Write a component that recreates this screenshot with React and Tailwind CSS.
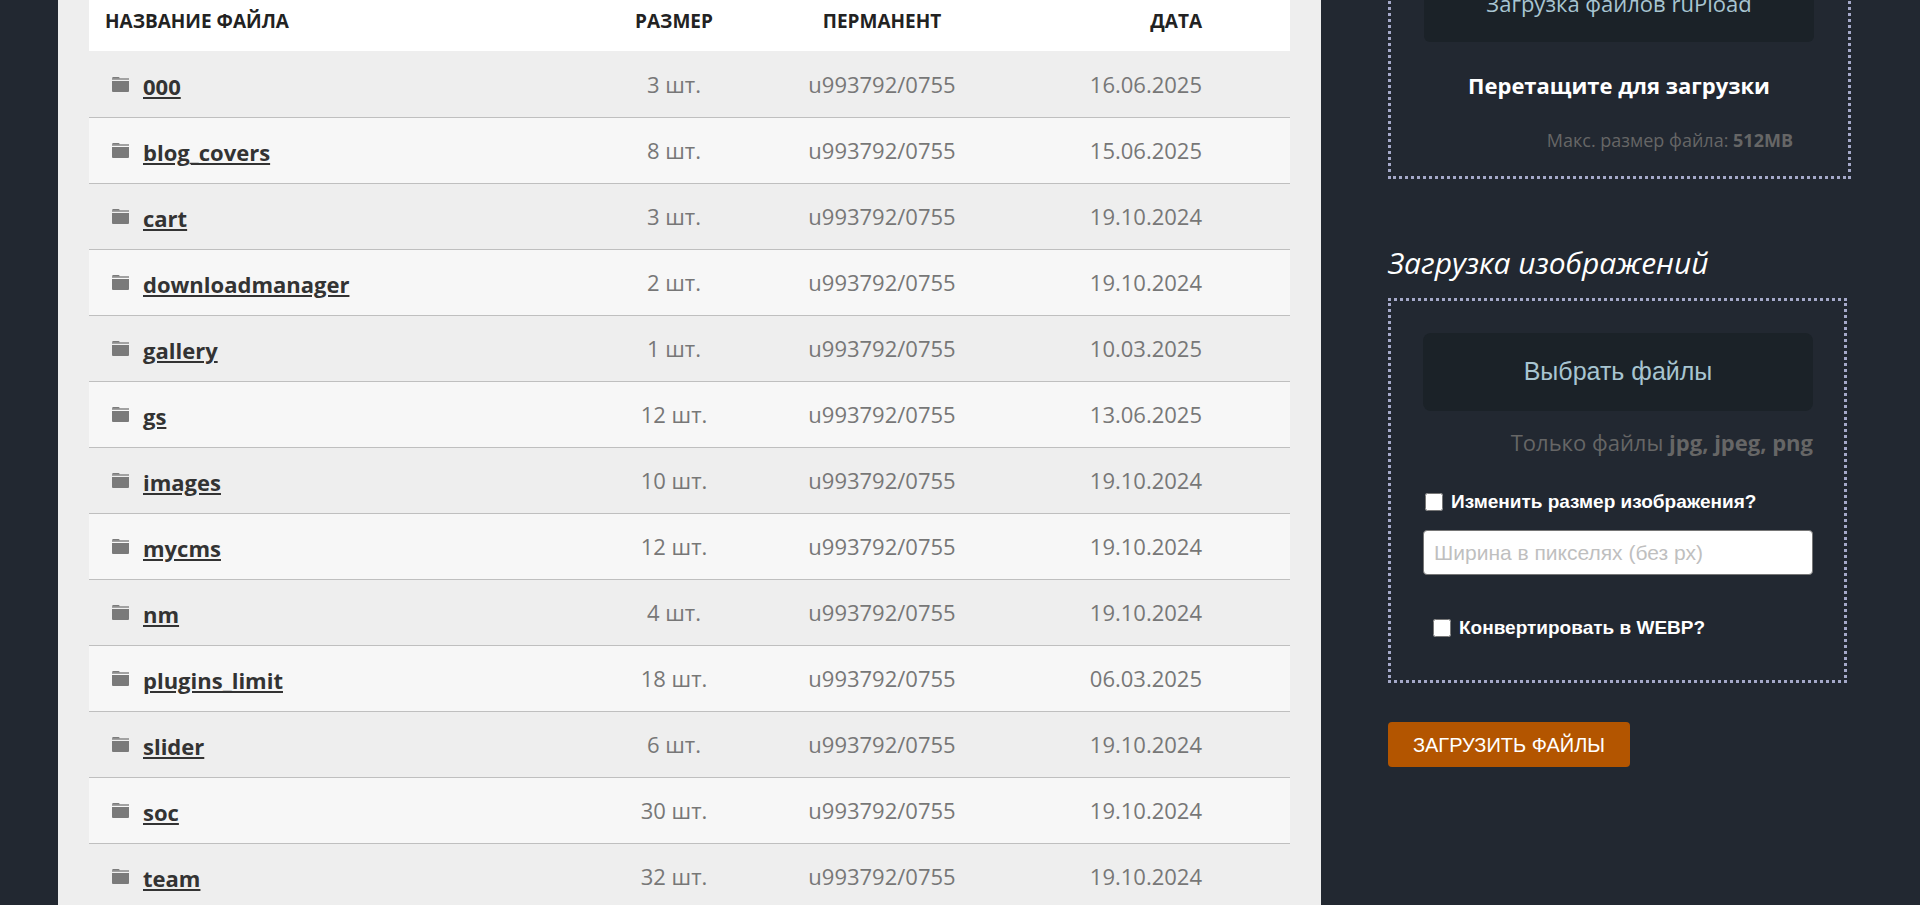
import { useState } from "react";

const folders = [
  { name: "000", size: "3 шт.", date: "16.06.2025" },
  { name: "blog_covers", size: "8 шт.", date: "15.06.2025" },
  { name: "cart", size: "3 шт.", date: "19.10.2024" },
  { name: "downloadmanager", size: "2 шт.", date: "19.10.2024" },
  { name: "gallery", size: "1 шт.", date: "10.03.2025" },
  { name: "gs", size: "12 шт.", date: "13.06.2025" },
  { name: "images", size: "10 шт.", date: "19.10.2024" },
  { name: "mycms", size: "12 шт.", date: "19.10.2024" },
  { name: "nm", size: "4 шт.", date: "19.10.2024" },
  { name: "plugins_limit", size: "18 шт.", date: "06.03.2025" },
  { name: "slider", size: "6 шт.", date: "19.10.2024" },
  { name: "soc", size: "30 шт.", date: "19.10.2024" },
  { name: "team", size: "32 шт.", date: "19.10.2024" },
];

const FolderIcon = () => (
  <svg width="17" height="15" viewBox="0 0 17 15" className="shrink-0" aria-hidden="true">
    <path d="M0 3V1.2Q0 0 1.2 0H6.4Q7.4 0 7.8 1H17V3Z" fill="#a2a2a2" />
    <path d="M1 0H6.6L7.8 1.4H0.4Z" fill="#7c7c7c" />
    <path d="M0 4H17V14Q17 15 16 15H1Q0 15 0 14Z" fill="#7a7a7a" />
  </svg>
);

const FileTable = () => (
  <table className="w-full table-fixed border-collapse text-[22px] leading-[30px] text-[#777777]">
    <thead className="bg-white text-[19px] leading-[26px] font-bold text-[#222222] uppercase">
      <tr className="h-[51px] border-b border-[#eeeeee] align-top">
        <th className="pt-2 pl-4 text-left">Название файла</th>
        <th className="w-[180px] pt-2 text-center">Размер</th>
        <th className="w-[236px] pt-2 text-center">Перманент</th>
        <th className="w-[290px] pt-2 pr-[88px] text-right">Дата</th>
      </tr>
    </thead>
    <tbody>
      {folders.map((folder) => (
        <tr key={folder.name} className="h-[66px] border-b border-[#bfbfbf] odd:bg-[#eeeeee] even:bg-[#f7f7f7]">
          <td className="pl-[23px]">
            <div className="flex items-center gap-[14px]">
              <FolderIcon />
              <a href="#" className="pt-1 font-bold text-[#333333] underline underline-offset-2">
                {folder.name}
              </a>
            </div>
          </td>
          <td className="text-center">{folder.size}</td>
          <td className="text-center">u993792/0755</td>
          <td className="pr-[88px] text-right">{folder.date}</td>
        </tr>
      ))}
    </tbody>
  </table>
);

const UploadPanel = () => {
  const [resize, setResize] = useState(false);
  const [webp, setWebp] = useState(false);
  const [width, setWidth] = useState("");

  return (
    <aside className="-mt-[72px] w-[599px] shrink-0 pr-[69px] pl-[67px]">
      <div className="border-[3px] border-dotted border-[#a5a9c9] pt-8 pr-[34px] pb-[22px] pl-[33px]">
        <button type="button" className="h-[79px] w-full rounded-md bg-[#1b2228] pt-[2px] text-[22px] text-[#a8c5d1]">
          Загрузка файлов ruPload
        </button>
        <p className="mt-[27px] text-center text-[22px] leading-[32px] font-bold text-white">Перетащите для загрузки</p>
        <p className="mt-[25px] pr-[21px] text-right text-lg leading-[28px] text-[#666666]">
          Макс. размер файла: <b>512MB</b>
        </p>
      </div>

      <form onSubmit={(e) => e.preventDefault()}>
        <h2 className="mt-16 text-[30px] leading-[40px] text-white italic">Загрузка изображений</h2>
        <div className="mt-[15px] mr-1 border-[3px] border-dotted border-[#a5a9c9] pt-8 pr-[31px] pb-[41px] pl-8 font-['Liberation_Sans',sans-serif]">
          <button type="button" className="h-[78px] w-full rounded-lg bg-[#1b2228] text-[25px] text-[#a8c5d1]">
            Выбрать файлы
          </button>
          <p className="mt-[15px] text-right font-['Open_Sans',sans-serif] text-[22px] leading-[32px] text-[#666666]">
            Только файлы <b>jpg, jpeg, png</b>
          </p>
          <label className="mt-[33px] flex items-center gap-2 text-[19px] leading-[22px] font-bold text-white">
            <input
              type="checkbox"
              checked={resize}
              onChange={(e) => setResize(e.target.checked)}
              className="ml-[2px] size-[18px]"
            />
            Изменить размер изображения?
          </label>
          <input
            type="text"
            aria-label="Ширина в пикселях"
            placeholder="Ширина в пикселях (без px)"
            value={width}
            onChange={(e) => setWidth(e.target.value)}
            className="mt-[17px] h-[45px] w-full rounded-sm border border-[#767676] bg-white px-[10px] text-[21px] text-[#222222] placeholder:text-[#bfbfbf]"
          />
          <label className="mt-[42px] flex items-center gap-2 text-[19px] leading-[22px] font-bold text-white">
            <input
              type="checkbox"
              checked={webp}
              onChange={(e) => setWebp(e.target.checked)}
              className="ml-[10px] size-[18px]"
            />
            Конвертировать в WEBP?
          </label>
        </div>
        <button
          type="submit"
          className="mt-[39px] h-[45px] w-[242px] rounded-[4px] bg-[#b35500] font-['Liberation_Sans',sans-serif] text-xl text-white uppercase"
        >
          Загрузить файлы
        </button>
      </form>
    </aside>
  );
};

export default function App() {
  return (
    <div className="flex h-screen overflow-hidden bg-[#222831] pl-[58px] font-['Open_Sans',sans-serif]">
      <main className="min-w-0 flex-1 bg-[#eeeeee] pr-[31px] pl-[31px]">
        <FileTable />
      </main>
      <UploadPanel />
    </div>
  );
}
